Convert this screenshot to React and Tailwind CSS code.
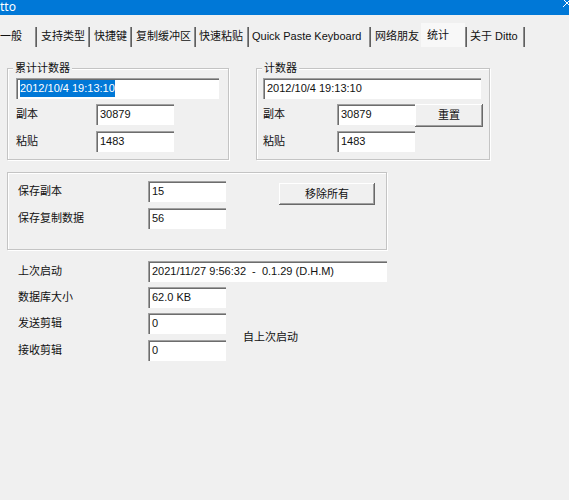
import React from "react";

const font = "font-['Liberation_Sans','Noto_Sans_CJK_SC',sans-serif]";

function Field({ className = "", children }) {
  return (
    <div
      className={`h-[21px] bg-white pl-[4px] flex items-center leading-none shadow-[inset_1px_1px_0_#a0a0a0,inset_2px_2px_0_#6d6d6d] ${className}`}
    >
      {children}
    </div>
  );
}

function Button({ className = "", children }) {
  return (
    <div
      className={`flex items-center justify-center bg-[#f0f0f0] shadow-[inset_-1px_-1px_0_#696969,inset_1px_1px_0_#ffffff,inset_-2px_-2px_0_#a0a0a0] ${className}`}
    >
      {children}
    </div>
  );
}

function Box({ label, className = "", children }) {
  return (
    <div
      className={`relative border border-[#c4c4c4] shadow-[1px_1px_0_#ffffff,inset_1px_1px_0_#ffffff] ${className}`}
    >
      {label && (
        <span className="absolute left-[5px] top-[-8px] bg-[#f0f0f0] px-[2px] leading-[14px]">
          {label}
        </span>
      )}
      {children}
    </div>
  );
}

function Row({ label, labelW, className = "", children }) {
  return (
    <div className={`flex items-center ${className}`}>
      <span className={labelW}>{label}</span>
      {children}
    </div>
  );
}

const tabs = [
  { label: "一般", w: "w-[35px]", pl: "pl-0" },
  { label: "支持类型", w: "w-[51px]", pl: "pl-[4px]" },
  { label: "快捷键", w: "w-[40px]", pl: "pl-[4px]" },
  { label: "复制缓冲区", w: "w-[62px]", pl: "pl-[4px]" },
  { label: "快速粘贴", w: "w-[51px]", pl: "pl-[3px]" },
  { label: "Quick Paste Keyboard", w: "w-[120px]", pl: "pl-[3px]" },
];

function Sep() {
  return <div className="w-[2px] h-[20px] border-l border-[#8c8c8c] border-r border-r-[#5f5f5f]" />;
}

export default function App() {
  return (
    <div className={`w-[569px] h-[500px] overflow-hidden bg-[#f0f0f0] text-[11px] text-[#111] ${font}`}>
      {/* title bar */}
      <div className="h-[15px] bg-[#0078d7] flex justify-between items-start overflow-hidden">
        <span className="text-white text-[12px] leading-none pt-[1px] font-['Noto_Sans',sans-serif]">tto</span>
        <svg width="10" height="10" viewBox="0 0 10 10" className="-mt-[2px] mr-[-3px]">
          <path d="M1 1 L9 9 M9 1 L1 9" stroke="#ffffff" strokeWidth="1" />
        </svg>
      </div>

      {/* tabs */}
      <div className="mt-[8px] h-[24px] flex items-end">
        {tabs.map((t) => (
          <React.Fragment key={t.label}>
            <div className={`${t.w} h-[20px] flex items-center whitespace-nowrap ${t.pl} pb-[1px]`}>
              {t.label}
            </div>
            <Sep />
          </React.Fragment>
        ))}
        <div className="w-[50px] h-[20px] flex items-center pl-[4px] pb-[1px]">网络朋友</div>
        <div className="w-[44px] h-[24px] flex items-start pt-[4px] pl-[6px] bg-[#f8f8f8]">统计</div>
        <Sep />
        <div className="w-[56px] h-[20px] flex items-center pl-[3px] pb-[1px] whitespace-nowrap">关于 Ditto</div>
        <Sep />
      </div>

      {/* counters */}
      <div className="mt-[21px] flex items-start">
        <Box label="累计计数器" className="ml-[7px] w-[222px] h-[92px] pl-[8px] pt-[9px]">
          <Field className="w-[203px] pl-[3px]">
            <span className="bg-[#0078d7] text-white leading-[17px]">2012/10/4 19:13:10</span>
          </Field>
          <Row label="副本" labelW="w-[80px]" className="mt-[5px]">
            <Field className="w-[78px]">30879</Field>
          </Row>
          <Row label="粘贴" labelW="w-[80px]" className="mt-[6px]">
            <Field className="w-[78px]">1483</Field>
          </Row>
        </Box>

        <Box label="计数器" className="ml-[27px] w-[234px] h-[92px] pl-[6px] pt-[9px]">
          <Field className="w-[218px]">2012/10/4 19:13:10</Field>
          <div className="mt-[5px] flex items-start">
            <span className="w-[74px] h-[21px] flex items-center">副本</span>
            <Field className="w-[78px]">30879</Field>
            <Button className="w-[68px] h-[23px]">重置</Button>
          </div>
          <Row label="粘贴" labelW="w-[74px]" className="mt-[4px]">
            <Field className="w-[78px]">1483</Field>
          </Row>
        </Box>
      </div>

      {/* saved */}
      <Box className="mt-[12px] ml-[7px] w-[380px] h-[78px] pl-[10px] pt-[8px] flex items-start">
        <div>
          <Row label="保存副本" labelW="w-[130px]">
            <Field className="w-[78px]">15</Field>
          </Row>
          <Row label="保存复制数据" labelW="w-[130px]" className="mt-[6px]">
            <Field className="w-[78px]">56</Field>
          </Row>
        </div>
        <Button className="ml-[53px] mt-[2px] w-[96px] h-[22px]">移除所有</Button>
      </Box>

      {/* info */}
      <div className="mt-[11px] pl-[18px]">
        <Row label="上次启动" labelW="w-[130px]">
          <Field className="w-[239px] whitespace-pre">2021/11/27 9:56:32  -  0.1.29 (D.H.M)</Field>
        </Row>
        <Row label="数据库大小" labelW="w-[130px]" className="mt-[5px]">
          <Field className="w-[78px]">62.0 KB</Field>
        </Row>
        <div className="mt-[5px] flex items-center">
          <div>
            <Row label="发送剪辑" labelW="w-[130px]">
              <Field className="w-[78px]">0</Field>
            </Row>
            <Row label="接收剪辑" labelW="w-[130px]" className="mt-[6px]">
              <Field className="w-[78px]">0</Field>
            </Row>
          </div>
          <span className="ml-[17px]">自上次启动</span>
        </div>
      </div>
    </div>
  );
}
